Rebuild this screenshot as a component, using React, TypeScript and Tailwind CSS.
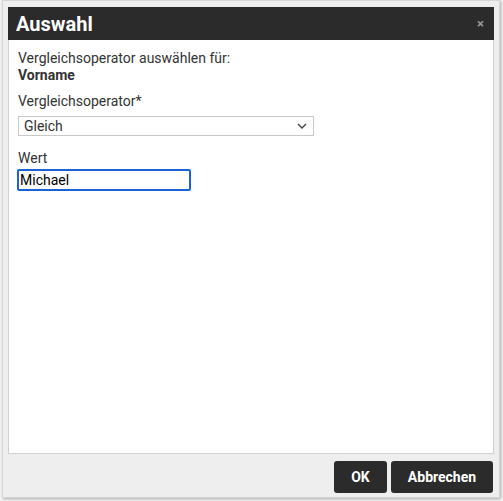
import React from 'react';

export default function App() {
  return (
    <div className="w-[503px] h-[501px] bg-[#f4f4f4] pl-[2px] font-['Roboto',sans-serif]">
      <div className="w-[498px] h-[498px] bg-[#eeeeee] border border-[#d6d6d6] shadow-[1px_1px_3px_rgba(0,0,0,0.3)] px-[5px] pt-[6px] flex flex-col">
        <div className="h-[33px] bg-[#2b2b2b] flex items-center justify-between pl-[8px] pr-[10px]">
          <span className="text-white text-[20px] font-bold leading-none">Auswahl</span>
          <span className="text-[#9a9a9a] text-[13px] font-bold leading-none">×</span>
        </div>
        <div className="h-[414px] bg-white border-x border-b border-[#d0d0d0] px-[9px] pt-[10px] text-[14px] leading-[17px] text-[#333333]">
          <div>Vergleichsoperator auswählen für:</div>
          <div className="font-bold">Vorname</div>
          <div className="mt-[9px]">Vergleichsoperator*</div>
          <div className="mt-[6px] w-[296px] h-[20px] border border-[#c8c8c8] flex items-center justify-between pl-[5px] pr-[6px]">
            <span>Gleich</span>
            <svg width="10" height="6" viewBox="0 0 10 6" fill="none" stroke="#444" strokeWidth="1.4">
              <path d="M1 1l4 4 4-4" />
            </svg>
          </div>
          <div className="mt-[14px]">Wert</div>
          <div className="mt-[2px] -ml-[1px] w-[174px] h-[22px] border-2 border-[#1a63d6] rounded-[2px] flex items-center pl-[1px] text-black">
            Michael
          </div>
        </div>
        <div className="flex justify-end gap-[4px] pt-[7px] pr-[1px]">
          <button className="h-[32px] w-[53px] bg-[#2b2b2b] text-white text-[14px] font-bold rounded-[3px]">OK</button>
          <button className="h-[32px] w-[102px] bg-[#2b2b2b] text-white text-[14px] font-bold rounded-[3px]">Abbrechen</button>
        </div>
      </div>
    </div>
  );
}
